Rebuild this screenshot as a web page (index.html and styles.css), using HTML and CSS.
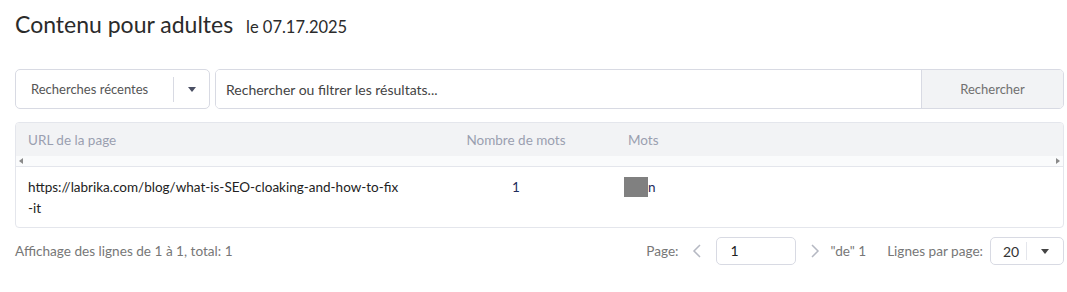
FILE: index.html
```html
<!DOCTYPE html>
<html lang="fr">
<head>
    <meta charset="UTF-8">
    <title>Contenu pour adultes</title>
    <link rel="stylesheet" href="styles.css">
</head>
<body>
    <div id="page">
        <h1 class="titre">Contenu pour adultes <span class="date">le 07.17.2025</span></h1>

        <div class="recherche">
            <div class="recentes">
                <span class="recentes_txt">Recherches récentes</span>
                <span class="recentes_fleche"><span class="triangle"></span></span>
            </div>
            <div class="champ">
                <input type="text" class="champ_input" placeholder="Rechercher ou filtrer les résultats...">
                <button class="champ_btn">Rechercher</button>
            </div>
        </div>

        <div class="tableau">
            <div class="ligne entete">
                <div class="col col_url">URL de la page</div>
                <div class="col col_nb">Nombre de mots</div>
                <div class="col col_mots">Mots</div>
            </div>
            <div class="defilement">
                <span class="fl fl_gauche"></span>
                <span class="fl fl_droite"></span>
            </div>
            <div class="ligne corps">
                <div class="col col_url">https://labrika.com/blog/what-is-SEO-cloaking-and-how-to-fix<br>-it</div>
                <div class="col col_nb nombre">1</div>
                <div class="col col_mots mot"><span class="masque"></span>n</div>
            </div>
        </div>

        <div class="pied">
            <div class="affichage">Affichage des lignes de 1 à 1, total: 1</div>
            <div class="pagination">
                <span class="lbl">Page:</span>
                <span class="chevron">
                    <svg width="10" height="14" viewBox="0 0 10 14"><polyline points="8,1 2,7 8,13" fill="none" stroke="#b5b8c2" stroke-width="1.5"/></svg>
                </span>
                <div class="page_input">1</div>
                <span class="chevron">
                    <svg width="10" height="14" viewBox="0 0 10 14"><polyline points="2,1 8,7 2,13" fill="none" stroke="#b5b8c2" stroke-width="1.5"/></svg>
                </span>
                <span class="lbl de">"de" 1</span>
                <span class="lbl lignes">Lignes par page:</span>
                <div class="par_page">
                    <span class="par_page_val">20</span>
                    <span class="par_page_fl"><span class="triangle fonce"></span></span>
                </div>
            </div>
        </div>
    </div>
</body>
</html>
```

FILE: styles.css
```css
body {
    margin: 0;
    background-color: white;
    font-family: Lato, "Open Sans", sans-serif;
    color: #222;
}

#page {
    padding: 0 3px 0 15px;
}

.titre {
    margin: 0;
    padding-top: 10px;
    height: 69px;
    box-sizing: border-box;
    font-weight: normal;
    font-size: 23px;
    color: #2b2b2b;
}

.date {
    font-size: 16.5px;
    margin-left: 7px;
}

.recherche {
    display: flex;
    gap: 5px;
    height: 40px;
}

.recentes {
    width: 195px;
    box-sizing: border-box;
    border: 1px solid #d8dae3;
    border-radius: 5px;
    display: flex;
    align-items: center;
}

.recentes_txt {
    flex: 1;
    padding-left: 15px;
    font-size: 13px;
    color: #555;
}

.recentes_fleche {
    width: 35px;
    height: 25px;
    border-left: 1px solid #d8dae3;
    display: flex;
    align-items: center;
    justify-content: center;
}

.triangle {
    width: 0;
    height: 0;
    border-left: 4px solid transparent;
    border-right: 4px solid transparent;
    border-top: 5px solid #4a4f63;
}

.triangle.fonce {
    border-top-color: #444;
}

.champ {
    flex: 1;
    display: flex;
    border: 1px solid #d8dae3;
    border-radius: 5px;
    overflow: hidden;
}

.champ_input {
    flex: 1;
    border: none;
    outline: none;
    padding-left: 10px;
    font-family: inherit;
    font-size: 14px;
}

.champ_input::placeholder {
    color: #444;
}

.champ_btn {
    width: 142px;
    border: none;
    border-left: 1px solid #d8dae3;
    background-color: #f2f3f5;
    font-family: inherit;
    font-size: 13px;
    color: #707070;
}

.tableau {
    margin-top: 13px;
    border: 1px solid #e4e6ec;
    border-radius: 4px;
    overflow: hidden;
}

.ligne {
    display: flex;
}

.col {
    box-sizing: border-box;
}

.entete {
    height: 33px;
    align-items: center;
    background-color: #f2f3f5;
    font-size: 13.5px;
    color: #9a9fb0;
}

.col_url {
    width: 400px;
    padding-left: 12px;
}

.col_nb {
    width: 200px;
    text-align: center;
}

.col_mots {
    padding-left: 12px;
}

.defilement {
    height: 10px;
    background-color: #fafbfc;
    border-bottom: 1px solid #e4e6ec;
    display: flex;
    justify-content: space-between;
    align-items: center;
    padding: 0 3px;
}

.fl {
    width: 0;
    height: 0;
    border-top: 3px solid transparent;
    border-bottom: 3px solid transparent;
}

.fl_gauche {
    border-right: 4px solid #8a8a8a;
}

.fl_droite {
    border-left: 4px solid #8a8a8a;
}

.corps {
    height: 60px;
    padding-top: 10px;
    box-sizing: border-box;
    font-size: 13.5px;
    line-height: 21px;
}

.nombre {
    color: #1f2d5c;
}

.mot {
    display: flex;
    align-items: flex-start;
    color: #1f2d5c;
}

.masque {
    display: inline-block;
    width: 24px;
    height: 20px;
    margin-left: -4px;
    background-color: #808080;
}

.pied {
    display: flex;
    justify-content: space-between;
    align-items: center;
    margin-top: 9px;
    height: 28px;
    font-size: 13.6px;
    color: #777;
}

.pagination {
    display: flex;
    align-items: center;
}

.lbl {
    color: #777;
}

.chevron {
    width: 38px;
    display: flex;
    justify-content: center;
}

.page_input {
    width: 80px;
    height: 28px;
    box-sizing: border-box;
    border: 1px solid #d8dae3;
    border-radius: 5px;
    padding-left: 13px;
    line-height: 26px;
    font-size: 14px;
    color: #222;
}

.de {
    margin-left: -4px;
}

.lignes {
    margin-left: 21px;
}

.par_page {
    margin-left: 7px;
    width: 74px;
    height: 28px;
    box-sizing: border-box;
    border: 1px solid #d8dae3;
    border-radius: 5px;
    display: flex;
    align-items: center;
}

.par_page_val {
    flex: 1;
    padding-left: 12px;
    font-size: 14px;
    color: #333;
}

.par_page_fl {
    width: 36px;
    height: 18px;
    border-left: 1px solid #e4e6ec;
    display: flex;
    align-items: center;
    justify-content: center;
}
```
